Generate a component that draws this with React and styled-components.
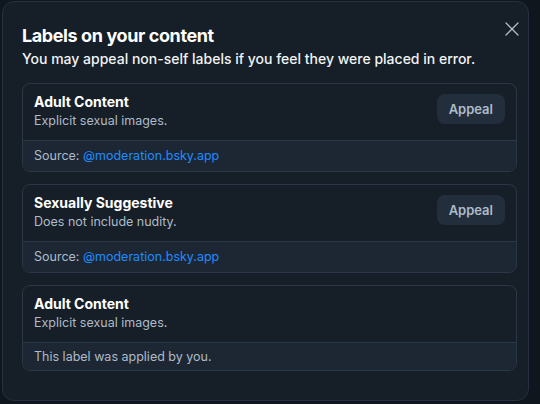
import styled, { createGlobalStyle } from "styled-components";
import { X } from "lucide-react";

const GlobalStyle = createGlobalStyle`
  html, body {
    margin: 0;
    padding: 0;
    background: #10161d;
    font-family: Inter, "Noto Sans", sans-serif;
    -webkit-font-smoothing: antialiased;
  }
`;

const labels = [
  {
    title: "Adult Content",
    desc: "Explicit sexual images.",
    source: "@moderation.bsky.app",
  },
  {
    title: "Sexually Suggestive",
    desc: "Does not include nudity.",
    source: "@moderation.bsky.app",
  },
  {
    title: "Adult Content",
    desc: "Explicit sexual images.",
    self: true,
  },
];

function App() {
  return (
    <>
      <GlobalStyle />
      <Page>
        <Modal>
          <CloseBtn aria-label="Close">
            <X size={24} strokeWidth={1.3} />
          </CloseBtn>
          <Title>Labels on your content</Title>
          <Subtitle>
            You may appeal non-self labels if you feel they were placed in error.
          </Subtitle>
          <List>
            {labels.map((l, idx) => (
              <Card key={idx}>
                <CardTop>
                  <Info>
                    <LabelName>{l.title}</LabelName>
                    <LabelDesc>{l.desc}</LabelDesc>
                  </Info>
                  {!l.self && <AppealBtn>Appeal</AppealBtn>}
                </CardTop>
                <CardFooter $self={l.self}>
                  {l.self ? (
                    "This label was applied by you."
                  ) : (
                    <>
                      Source: <SourceLink href="#">{l.source}</SourceLink>
                    </>
                  )}
                </CardFooter>
              </Card>
            ))}
          </List>
        </Modal>
      </Page>
    </>
  );
}

const Page = styled.div`
  width: 540px;
  height: 404px;
  overflow: hidden;
  padding: 1px 0 0 2px;
  box-sizing: border-box;
`;

const Modal = styled.div`
  position: relative;
  width: 527px;
  height: 400px;
  box-sizing: border-box;
  background: #161e27;
  border: 1px solid #253140;
  border-radius: 12px;
  padding: 22px 11px 0 19px;
`;

const CloseBtn = styled.button`
  position: absolute;
  top: 15px;
  right: 4px;
  width: 24px;
  height: 24px;
  display: flex;
  align-items: center;
  justify-content: center;
  background: none;
  border: none;
  padding: 0;
  color: #aebbc9;
  cursor: pointer;
`;

const Title = styled.h1`
  margin: 0;
  font-size: 18px;
  line-height: 24px;
  font-weight: 700;
  color: #ffffff;
  letter-spacing: -0.4px;
`;

const Subtitle = styled.p`
  margin: 1px 0 0;
  font-size: 14px;
  line-height: 20px;
  font-weight: 500;
  color: #f1f3f5;
`;

const List = styled.div`
  display: flex;
  flex-direction: column;
  gap: 12px;
  margin-top: 14px;
`;

const Card = styled.div`
  border: 1px solid #2a3746;
  border-radius: 8px;
  overflow: hidden;
`;

const CardTop = styled.div`
  display: flex;
  align-items: center;
  justify-content: space-between;
  padding: 8px 11px 10px;
`;

const Info = styled.div`
  display: flex;
  flex-direction: column;
`;

const LabelName = styled.div`
  font-size: 14px;
  line-height: 20px;
  font-weight: 700;
  color: #ffffff;
`;

const LabelDesc = styled.div`
  font-size: 12.5px;
  line-height: 18px;
  color: #aebbc9;
`;

const AppealBtn = styled.button`
  height: 30px;
  padding: 0 12px;
  margin-top: -4px;
  border: none;
  border-radius: 8px;
  background: #232e3c;
  color: #aebbc9;
  font-family: inherit;
  font-size: 13px;
  font-weight: 600;
  cursor: pointer;
`;

const CardFooter = styled.div`
  border-top: 1px solid #2a3746;
  background: #1c2733;
  padding: ${(p) => (p.$self ? "4px 11px 3px" : "5px 11px 5px")};
  font-size: 12.5px;
  line-height: 20px;
  color: #aebbc9;
`;

const SourceLink = styled.a`
  color: #208bfe;
  text-decoration: none;
`;

export default App;
